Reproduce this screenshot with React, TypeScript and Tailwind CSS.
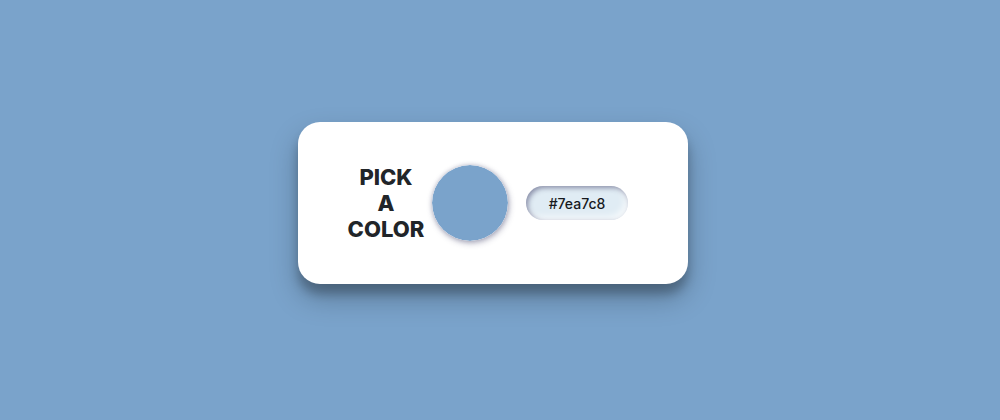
import { useState, type ReactElement } from "react";

const INITIAL_COLOR = "#7aa3cb";
const INITIAL_TEXT = "#7ea7c8";

export default function App(): ReactElement {
  const [color, setColor] = useState(INITIAL_COLOR);
  const [text, setText] = useState(INITIAL_TEXT);

  function pick(value: string) {
    setColor(value);
    setText(value);
  }

  return (
    <main
      className="flex min-h-screen items-center justify-center pr-3.5 pb-3.5"
      style={{ backgroundColor: color }}
    >
      <section className="flex items-center rounded-[22px] bg-white py-[42px] pr-15 pl-12 shadow-[0_14px_28px_rgba(0,0,0,0.25),0_10px_10px_rgba(0,0,0,0.22)]">
        <ColorPicker color={color} onPick={pick} />
        <ColorCode value={text} onChange={setText} onCommit={setColor} />
      </section>
    </main>
  );
}

function ColorPicker({
  color,
  onPick,
}: {
  color: string;
  onPick: (value: string) => void;
}): ReactElement {
  return (
    <div className="flex items-center gap-1.5">
      <label
        htmlFor="color"
        className="w-20 text-center font-['Inter',sans-serif] text-[22px] leading-[26px] font-extrabold text-[#212529]"
      >
        PICK
        <br />A<br />
        COLOR
      </label>
      <input
        id="color"
        type="color"
        value={color}
        onChange={(event) => onPick(event.target.value)}
        className="size-[76px] cursor-pointer appearance-none rounded-full border-0 bg-transparent p-0 shadow-[1px_2px_6px_rgba(50,50,93,0.4),0_0_4px_rgba(50,50,93,0.2)] [&::-webkit-color-swatch]:rounded-full [&::-webkit-color-swatch]:border-0 [&::-webkit-color-swatch-wrapper]:p-0"
      />
    </div>
  );
}

function ColorCode({
  value,
  onChange,
  onCommit,
}: {
  value: string;
  onChange: (value: string) => void;
  onCommit: (value: string) => void;
}): ReactElement {
  function update(next: string) {
    onChange(next);
    if (/^#[0-9a-f]{6}$/i.test(next)) onCommit(next);
  }

  return (
    <input
      type="text"
      aria-label="Color code"
      value={value}
      onChange={(event) => update(event.target.value)}
      className="ml-[18px] h-[34px] w-[102px] rounded-full bg-[#e0ecf4] text-center font-['Inter',sans-serif] text-sm font-medium text-[#16191d] shadow-[inset_2px_2px_5px_rgba(50,50,93,0.5),inset_-3px_-3px_7px_rgba(255,255,255,0.8)] outline-none"
    />
  );
}
